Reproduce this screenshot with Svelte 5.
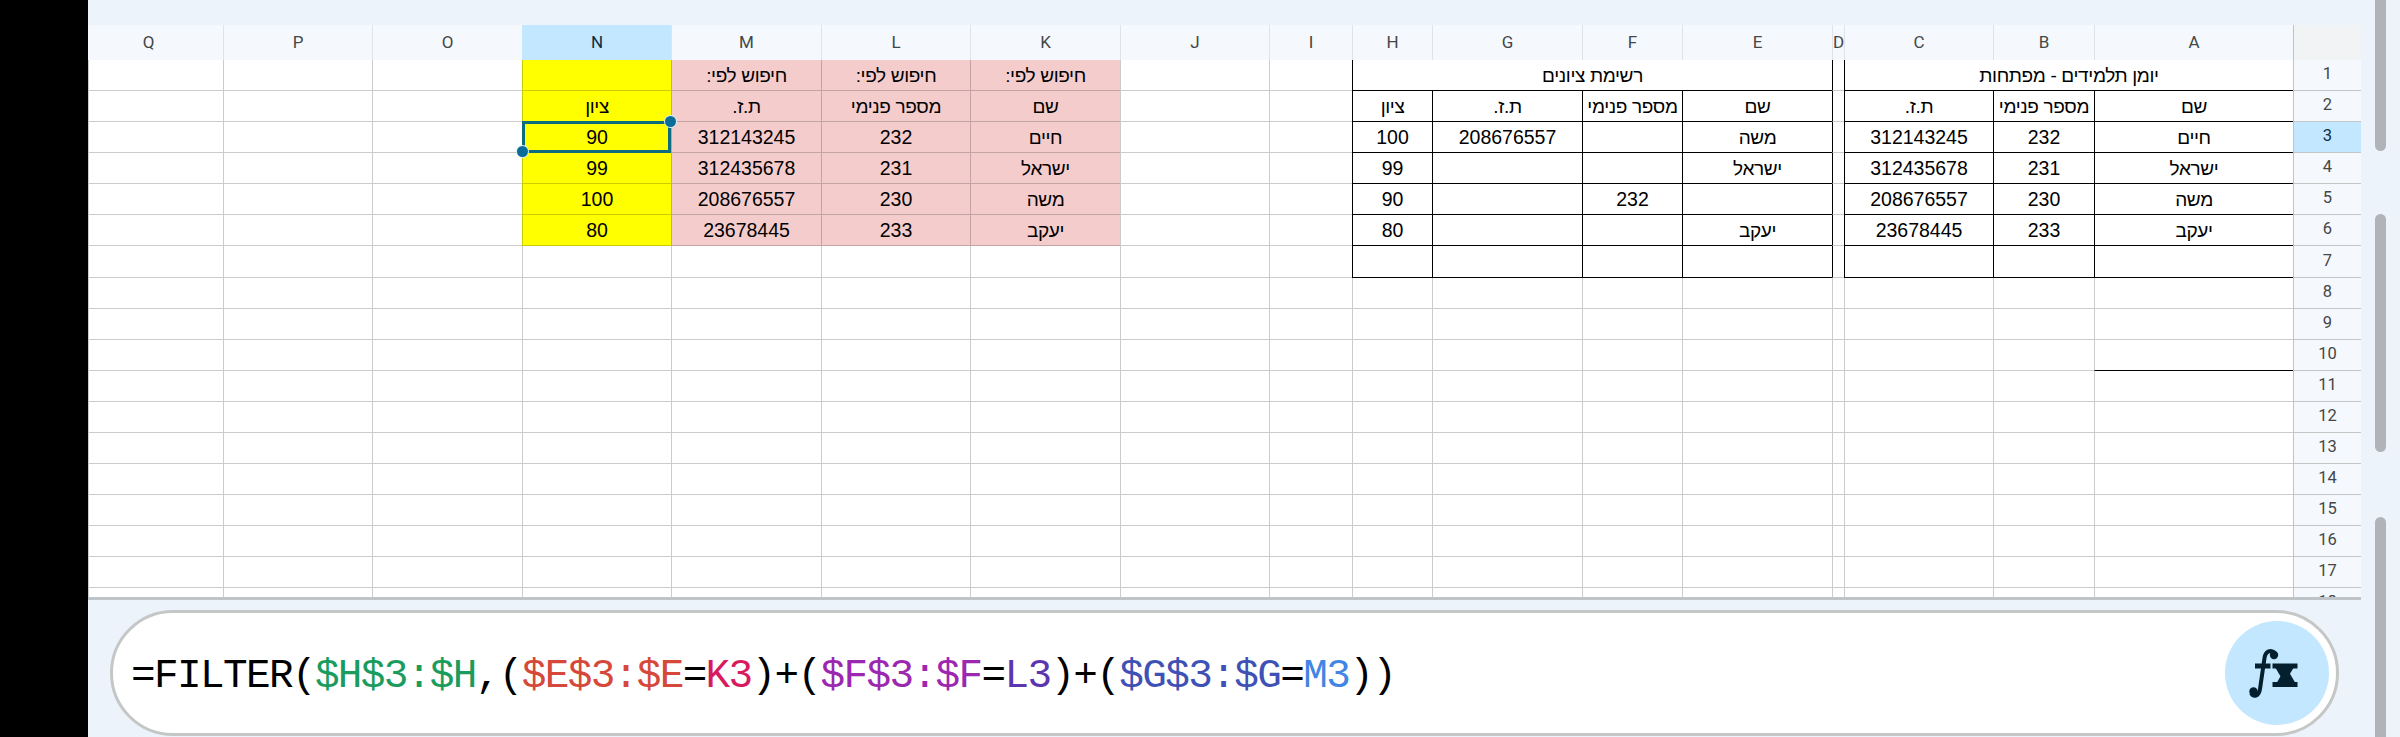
<script>
  const cols = ['Q','P','O','N','M','L','K','J','I','H','G','F','E','D','C','B','A'];
  const look = 'חיפוש לפי:';
  const nm = 'מספר פנימי';
  const tz = 'ת.ז.';
  const sh = 'שם';
  const gr = 'ציון';
  const data = {
    1: { M: look, L: look, K: look, H: 'רשימת ציונים', C: 'יומן תלמידים - מפתחות' },
    2: { N: gr, M: tz, L: nm, K: sh, H: gr, G: tz, F: nm, E: sh, C: tz, B: nm, A: sh },
    3: { N: '90', M: '312143245', L: '232', K: 'חיים', H: '100', G: '208676557', E: 'משה', C: '312143245', B: '232', A: 'חיים' },
    4: { N: '99', M: '312435678', L: '231', K: 'ישראל', H: '99', E: 'ישראל', C: '312435678', B: '231', A: 'ישראל' },
    5: { N: '100', M: '208676557', L: '230', K: 'משה', H: '90', F: '232', C: '208676557', B: '230', A: 'משה' },
    6: { N: '80', M: '23678445', L: '233', K: 'יעקב', H: '80', E: 'יעקב', C: '23678445', B: '233', A: 'יעקב' }
  };
  const rowNums = Array.from({ length: 18 }, (_, i) => i + 1);

  function rowCells(r) {
    const out = [];
    for (let i = 0; i < cols.length; i++) {
      const c = cols[i];
      const span = r === 1 && c === 'H' ? 4 : r === 1 && c === 'C' ? 3 : 1;
      out.push({ c, span, text: (data[r] && data[r][c]) || '' });
      i += span - 1;
    }
    return out;
  }

  function cls(c, r, text) {
    const names = ['cell'];
    if (c === 'N' && r <= 6) names.push('yellow');
    if ('MLK'.includes(c) && r <= 6) names.push('pink');
    const inTable = 'HGFECBA'.includes(c) && r <= 7;
    if (inTable) names.push('bb');
    if (inTable || (c === 'D' && r <= 7)) names.push('bl');
    if (c === 'A' && r === 10) names.push('bb');
    if (/[\u0590-\u05FF]/.test(text)) names.push('heb');
    return names.join(' ');
  }

  const formula = [
    ['=FILTER(', 'k'], ['$H$3:$H', 'green'], [',(', 'k'], ['$E$3:$E', 'red'], ['=', 'k'], ['K3', 'rose'],
    [')+(', 'k'], ['$F$3:$F', 'purple'], ['=', 'k'], ['L3', 'violet'], [')+(', 'k'], ['$G$3:$G', 'indigo'],
    ['=', 'k'], ['M3', 'blue'], ['))', 'k']
  ];
</script>

<div class="page">
  <div class="side"></div>
  <main class="main">
    <div class="topband"></div>
    <div class="sheetrow">
      <div class="sheet">
        {#each cols as c}
          <div class="colhead" class:sel={c === 'N'} class:clip={c === 'Q'}>{c}</div>
        {/each}
        <div class="corner"></div>
        {#each rowNums as r}
          {#each rowCells(r) as cell}
            <div class={cls(cell.c, r, cell.text)} class:s3={cell.span === 3} class:s4={cell.span === 4}>
              {cell.text}
              {#if cell.c === 'N' && r === 3}
                <span class="selbox"></span>
                <span class="handle tr"></span>
                <span class="handle bl-h"></span>
              {/if}
            </div>
          {/each}
          <div class="rowhead" class:sel={r === 3}><span>{r}</span></div>
        {/each}
      </div>
    </div>
    <div class="bar">
      <div class="formula">
        <div class="ftext">{#each formula as [t, k]}<span class={k}>{t}</span>{/each}</div>
        <div class="fx">
          <svg width="80" height="67" viewBox="0 0 80 67" aria-hidden="true">
            <g fill="#04202f">
              <circle cx="16.5" cy="51.5" r="4.2"/>
              <circle cx="37" cy="15" r="4.2"/>
              <rect x="18" y="23.5" width="15.5" height="5"/>
              <rect x="35.5" y="23.5" width="25" height="5"/>
              <rect x="35.5" y="42" width="25" height="5"/>
              <path d="M38 27 H49 L59 44 H48 Z"/>
              <path d="M49 27 H57 L47 44 H39 Z"/>
            </g>
            <path d="M14 53 C17 58 22 56 23 49 L27.5 18 C28.5 11 34 9 38 13" fill="none" stroke="#04202f" stroke-width="4"/>
          </svg>
        </div>
      </div>
    </div>
  </main>
  <div class="thumb t1"></div>
  <div class="thumb t2"></div>
  <div class="thumb t3"></div>
</div>

<style>
  :global(body) { margin: 0; background: #000; }
  .page { position: relative; display: flex; width: 2400px; height: 737px; overflow: hidden; background: #000; }
  .side { width: 88px; flex: none; background: #000; }
  .main { flex: 1; display: flex; flex-direction: column; background: #edf3fb; min-width: 0; }
  .topband { height: 25px; flex: none; }
  .sheetrow { height: 575px; flex: none; overflow: hidden; }
  .sheet {
    width: 2273px;
    height: 575px;
    box-sizing: border-box;
    overflow: hidden;
    border-bottom: 3px solid #bfc4c8;
    display: grid;
    grid-template-columns: 135px 149px 150px 149px 150px 149px 150px 149px 83px 80px 150px 100px 150px 12px 149px 101px 199px 68px;
    grid-template-rows: 35px repeat(6, 31px) 32px repeat(11, 31px);
    background: #fff;
  }
  .colhead {
    display: flex; align-items: center; justify-content: center;
    box-sizing: border-box;
    padding-bottom: 1px;
    background: #f5f9fe;
    border-left: 1px solid #dfe3e8;
    font: 17px Roboto, sans-serif;
    color: #444746;
  }
  .colhead.clip { border-left: 0; padding-right: 14px; }
  .colhead.sel { background: #c2e7ff; color: #0b2e45; border-left-color: #c2e7ff; }
  .corner { background: #f1f3f4; border-left: 1px solid #bfc4c8; }
  .cell {
    position: relative;
    box-sizing: border-box;
    display: flex; align-items: center; justify-content: center;
    direction: rtl;
    padding-top: 1px;
    border-left: 1px solid rgba(0, 0, 0, 0.2);
    border-bottom: 1px solid rgba(0, 0, 0, 0.2);
    font: 19.5px "Liberation Sans", Arial, sans-serif;
    color: #000;
    white-space: nowrap;
  }
  .heb { font-size: 19px; letter-spacing: -0.35px; }
  .s3 { grid-column: span 3; }
  .s4 { grid-column: span 4; }
  .yellow { background: #ffff00; }
  .pink { background: #f4cccc; }
  .bb { border-bottom-color: #000; }
  .bl { border-left-color: #000; }
  .rowhead {
    box-sizing: border-box;
    display: flex; align-items: center; justify-content: center;
    background: #f5f9fe;
    border-left: 1px solid #bfc4c8;
    border-bottom: 1px solid #c4c7c5;
    font: 16.5px Roboto, sans-serif;
    color: #444746;
    padding-bottom: 3px;
  }
  .rowhead.sel { background: #c2e7ff; color: #0b2e45; }
  .selbox {
    position: absolute;
    left: -1px; right: 0; top: -1px; bottom: -1px;
    border: 3px solid #0d6b7f;
    pointer-events: none;
  }
  .handle {
    position: absolute;
    width: 11px; height: 11px;
    border-radius: 50%;
    background: #0b6c97;
    box-shadow: 0 0 0 1px #d8eef8;
    z-index: 2;
  }
  .handle.tr { right: -5px; top: -6px; }
  .handle.bl-h { left: -6px; bottom: -5px; }
  .bar { flex: 1; padding: 10px 61px 1px 22px; min-height: 0; display: flex; }
  .formula {
    flex: 1;
    box-sizing: border-box;
    display: flex; align-items: center; justify-content: space-between;
    background: #fff;
    border: 3px solid #c4c7c5;
    border-radius: 64px;
    padding: 0 7px 0 18px;
  }
  .ftext {
    font: 41px "Liberation Mono", "DejaVu Sans Mono", monospace;
    letter-spacing: -1.62px;
    white-space: pre;
    color: #000;
    padding-top: 5px;
  }
  .green { color: #1a9c5e; }
  .red { color: #d5483a; }
  .rose { color: #d81b60; }
  .purple { color: #9c27b0; }
  .violet { color: #5e35b1; }
  .indigo { color: #3f51b5; }
  .blue { color: #4285e4; }
  .fx {
    width: 104px; height: 104px; border-radius: 50%;
    background: #c2e7ff;
    display: flex; align-items: center; justify-content: center;
  }
  .thumb { position: absolute; left: 2375px; width: 11px; background: #b0b4b8; border-radius: 6px; }
  .t1 { top: -10px; height: 161px; }
  .t2 { top: 214px; height: 238px; }
  .t3 { top: 517px; height: 240px; }
</style>
